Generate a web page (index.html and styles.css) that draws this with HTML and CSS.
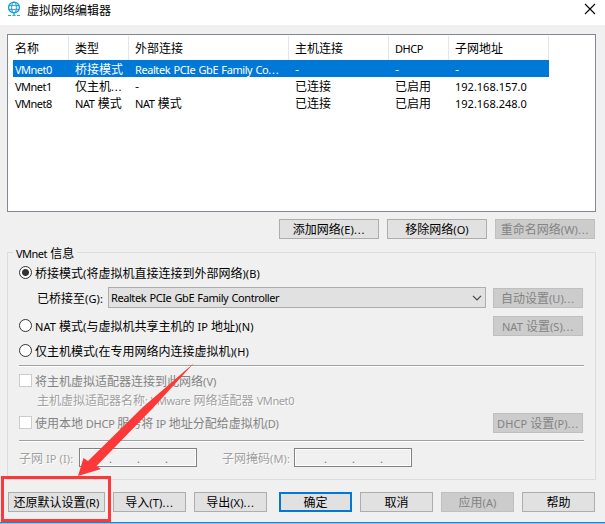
FILE: index.html
```html
<!DOCTYPE html>
<html lang="zh-CN">
<head>
<meta charset="utf-8">
<title>虚拟网络编辑器</title>
<link rel="stylesheet" href="styles.css">
</head>
<body>
<main class="window">
  <header class="titlebar">
    <svg class="globe" width="14" height="16" viewBox="0 0 14 16" fill="none" stroke="#1599d6">
      <circle cx="7" cy="6.5" r="5.4" stroke-width="1.3"/>
      <ellipse cx="7" cy="6.5" rx="2.4" ry="5.4"/>
      <path d="M1.6 4.6h10.8M1.6 8.4h10.8" stroke-width=".9"/>
      <path d="M7 12v2.5M1 14.5h3M5.500 14.5h3M10 14.5h3" stroke="#19b5a5" stroke-width="1.2"/>
    </svg>
    <h1>虚拟网络编辑器</h1>
    <svg class="close" width="12" height="12" viewBox="0 0 12 12" stroke="#000" stroke-width="1.1"><path d="M1 1l10 10M11 1L1 11"/></svg>
  </header>

  <section class="list">
    <div class="row head"><span>名称</span><span>类型</span><span>外部连接</span><span>主机连接</span><span><i>DHCP</i></span><span>子网地址</span></div>
    <div class="row selected"><span><i class="id">VMnet0</i></span><span>桥接模式</span><span><i>Realtek PCIe GbE Family Co<i class="dots">...</i></i></span><span>-</span><span>-</span><span>-</span></div>
    <div class="row"><span><i class="id">VMnet1</i></span><span>仅主机<i class="dots">...</i></span><span>-</span><span>已连接</span><span>已启用</span><span><i class="num">192.168.157.0</i></span></div>
    <div class="row"><span><i class="id">VMnet8</i></span><span><i>NAT </i>模式</span><span><i>NAT </i>模式</span><span>已连接</span><span>已启用</span><span><i class="num">192.168.248.0</i></span></div>
  </section>

  <div class="list-actions">
    <button>添加网络<i>(E)<i class="dots">...</i></i></button><button>移除网络<i>(O)</i></button><button disabled>重命名网络<i>(W)<i class="dots">...</i></i></button>
  </div>

  <section class="group">
    <h2><i class="id">VMnet </i>信息</h2>
    <div class="line bridge"><b class="radio on"></b><span>桥接模式<i>(</i>将虚拟机直接连接到外部网络<i>)(B)</i></span></div>
    <div class="line adapter">
      <span class="adapter-label">已桥接至<i>(G):</i></span>
      <div class="combo"><i>Realtek PCIe GbE Family Controller</i><svg width="10" height="6" viewBox="0 0 10 6" fill="none" stroke="#444" stroke-width="1.2"><path d="M1 .8l4 4 4-4"/></svg></div>
      <button disabled>自动设置<i>(U)<i class="dots">...</i></i></button>
    </div>
    <div class="line nat"><b class="radio"></b><span><i>NAT </i>模式<i>(</i>与虚拟机共享主机的<i> IP </i>地址<i>)(N)</i></span><button disabled><i>NAT </i>设置<i>(S)<i class="dots">...</i></i></button></div>
    <div class="line host"><b class="radio"></b><span>仅主机模式<i>(</i>在专用网络内连接虚拟机<i>)(H)</i></span></div>
    <hr>
    <div class="line connect off"><b class="check"></b><span>将主机虚拟适配器连接到此网络<i>(V)</i></span></div>
    <p class="adapter-name">主机虚拟适配器名称<i>: VMware </i>网络适配器<i> VMnet0</i></p>
    <div class="line dhcp off"><b class="check"></b><span>使用本地<i> DHCP </i>服务将<i> IP </i>地址分配给虚拟机<i>(D)</i></span><button disabled><i>DHCP </i>设置<i>(P)<i class="dots">...</i></i></button></div>
    <hr>
    <div class="line subnet">
      <span class="ip-label">子网<i> IP (I):</i></span><div class="ip"><s>.</s><s>.</s><s>.</s></div>
      <span class="mask-label">子网掩码<i>(M):</i></span><div class="ip"><s>.</s><s>.</s><s>.</s></div>
    </div>
  </section>

  <footer class="actions">
    <button class="restore">还原默认设置<i>(R)</i></button><button>导入<i>(T)<i class="dots">...</i></i></button><button>导出<i>(X)<i class="dots">...</i></i></button><button class="default">确定</button><button>取消</button><button disabled>应用<i>(A)</i></button><button>帮助</button>
  </footer>
  <svg class="callout" width="605" height="524" viewBox="0 0 605 524">
    <rect x="2.5" y="477.5" width="107" height="43" fill="none" stroke="#fd3838" stroke-width="3"/>
    <path d="M194 363L143 407L88 461L83.500 458L78 476L101 469L96.500 466L153 408z" fill="#fd3838"/>
  </svg>
</main>
</body>
</html>
```
FILE: styles.css
```css
* { box-sizing: border-box; }
body { margin: 0; }
.window {
  position: relative;
  width: 605px;
  height: 524px;
  overflow: hidden;
  display: flex;
  flex-direction: column;
  background: #f0f0f0;
  color: #000;
  font: 12px/17px "Noto Sans CJK SC", sans-serif;
  white-space: nowrap;
}
i { font: 11px/12px "Noto Sans", sans-serif; white-space: pre; letter-spacing: -0.42px; word-spacing: 0.8px; vertical-align: 0.5px; }
i i { vertical-align: baseline; }
.id { letter-spacing: -0.5px; }
.num { letter-spacing: 0; }
.line > span i { letter-spacing: 0.1px; word-spacing: 0; }
.line.dhcp > span i { letter-spacing: -0.2px; }
button i { letter-spacing: 0.1px; word-spacing: 0; }
i.dots, button i.dots { letter-spacing: 0.8px; }

.titlebar { flex: none; height: 25px; display: flex; align-items: flex-start; background: #fff; padding-left: 7px; }
.globe { margin-top: 1px; }
h1 { margin: 0 0 0 6px; font-size: 12px; font-weight: 400; line-height: 19px; }
.close { margin: 3px 9px 0 auto; }

.list { flex: none; height: 178px; width: 589px; margin: 9px 0 0 7px; padding: 1px 0 0 5px; border: 1px solid #828790; background: #fff; }
.row { display: grid; grid-template-columns: 56px 60px 160px 100px 60px 100px; width: 536px; height: 17px; }
.row span { padding-left: 6px; overflow: hidden; }
.row span:first-child { padding-left: 2px; }
.head { height: 24px; line-height: 23px; }
.head span { border-right: 1px solid #e5e5e5; }
.selected { background: #0078d7; color: #fff; }

button {
  height: 20px; padding: 0 0 1px; border: 1px solid #adadad; background: #e1e1e1; color: #000;
  font: 12px/16px "Noto Sans CJK SC", sans-serif; white-space: nowrap; flex: none;
}
button:disabled { background: #ccc; border-color: #bfbfbf; color: #838383; }
.list-actions { flex: none; display: flex; gap: 8px; margin: 7px 0 0 279px; }
.list-actions button { width: 100px; }

.group { flex: none; width: 589px; height: 228px; margin: 13px 0 0 7px; padding: 0 12px 0 11px; border: 1px solid #dcdcdc; display: flex; flex-direction: column; }
h2 { flex: none; align-self: flex-start; margin: -9px 0 0 -6px; padding: 0 3px; background: #f0f0f0; font-size: 12px; font-weight: 400; line-height: 17px; height: 17px; }
.line { flex: none; display: flex; align-items: center; height: 21px; }
.line span { height: 17px; }
.line button { width: 90px; margin-left: auto; align-self: flex-end; }
.bridge { margin-top: 1px; }
.adapter { margin-top: 4px; }
.adapter-label { width: 71px; margin-left: 18px; }
.combo { width: 378px; height: 21px; border: 1px solid #adadad; background: #e1e1e1; display: flex; align-items: center; justify-content: space-between; padding: 0 3px 0 2px; }
.nat { margin-top: 7px; }
.host { margin-top: 4px; }
.radio { flex: none; width: 13px; height: 13px; margin-right: 3px; border: 1px solid #333; border-radius: 50%; background: #fff; }
.radio.on { background: radial-gradient(circle, #333 3px, #fff 4px); }
.check { flex: none; width: 13px; height: 13px; margin-right: 3px; border: 1px solid #ccc; background: #fff; }
hr { flex: none; width: 565px; height: 2px; margin: 4px 0 0; border: 0; border-top: 1px solid #a0a0a0; border-bottom: 1px solid #fff; }
.connect { margin-top: 3px; }
.off { color: #838383; }
.adapter-name, .subnet { color: #a0a0a0; text-shadow: 1px 1px #fff; }
.adapter-name { margin: 1px 0 0 18px; height: 17px; line-height: 16px; }
.dhcp { margin-top: 3px; }
.dhcp + hr { margin-top: 7px; }
.subnet { margin-top: 6px; height: 19px; }
.ip-label { width: 60px; }
.mask-label { width: 72px; margin-left: 25px; }
.ip { width: 118px; height: 19px; border: 1px solid #828282; box-shadow: inset 0 0 0 1px #fff; display: flex; padding-left: 29px; color: #777; text-shadow: none; }
.ip s { width: 28px; text-decoration: none; font: 11px/19px "Noto Sans", sans-serif; }

.actions { display: flex; gap: 8px; padding: 12px 10px 10px 8px; flex: 1; border-bottom: 1px solid #8ec5ee; box-shadow: inset 0 -1px #1883d7; }
.actions button { width: 73px; }
.actions .restore { width: 97px; }
.actions .default { margin-left: 4px; border: 2px solid #0078d7; }
.callout { position: absolute; inset: 0; pointer-events: none; }
```
